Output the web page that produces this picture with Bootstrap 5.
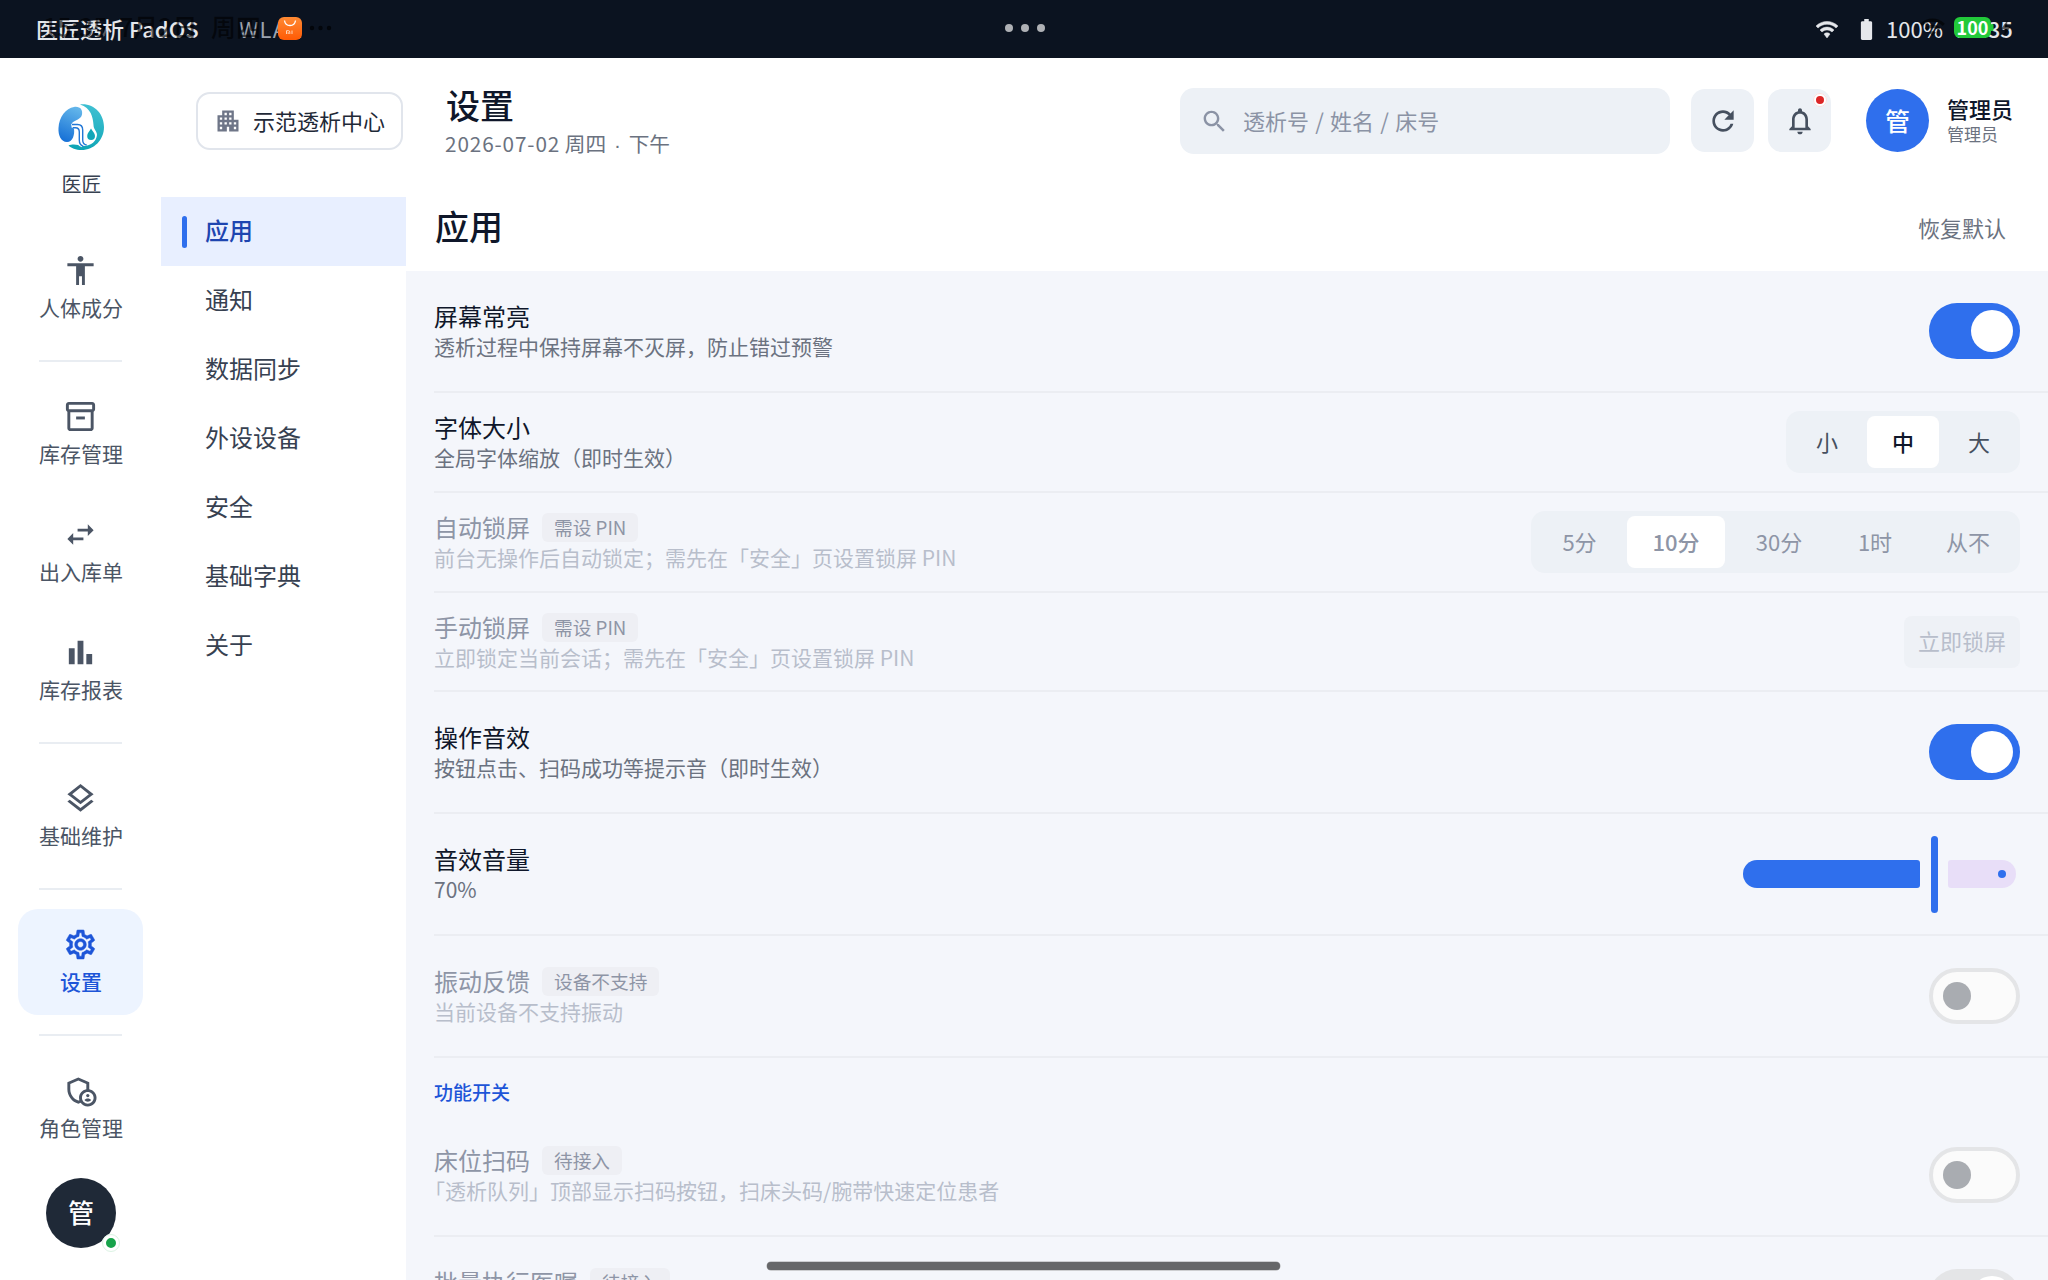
<!DOCTYPE html>
<html lang="zh-CN">
<head>
<meta charset="utf-8">
<meta name="viewport" content="width=device-width, initial-scale=1">
<title>医匠透析 PadOS</title>
<link href="https://cdn.jsdelivr.net/npm/bootstrap@5.3.0/dist/css/bootstrap.min.css" rel="stylesheet">
<style>
:root{--ink:#0f172a;--blue:#2f6fed;--blue-d:#1d55d8;--slate:#4b5565;--muted:#6b7280;--soft:#edf1f6;--line:#ebedf2}
body{font-family:"Noto Sans CJK SC",sans-serif;color:var(--ink);background:#fff;height:1280px;width:2048px;overflow:hidden;line-height:1}
svg{display:block;fill:currentColor;flex:none}
.statusbar{height:58px;background:#0b1320;color:#e5e7eb;font-size:22px;padding:0 35px 0 36px}
.sys{position:absolute;white-space:nowrap;line-height:1}
.ghost{color:rgba(0,0,0,.62);font-weight:500;font-size:25px}
#os{left:36px;top:17px;font-weight:500}
#net{left:239px;top:17px;color:#9ca3af;letter-spacing:1.2px}
#g1{left:43px;top:14px}
#g2{left:119px;top:14px}
#g3{left:211px;top:14px}
#pct{left:1886px;top:17px}
#clock{left:1956px;top:17px;font-weight:500}
#batt{left:1954px;top:17px;width:37px;height:21px;border-radius:6px;background:#22c93a;color:#fff;font-size:18px;font-weight:700;padding-bottom:1px}
.tri{margin-top:-2px}
.tri i{width:8px;height:8px;border-radius:50%;background:#afb1b5}
.rail{width:161px;flex:none}
.brand{padding-top:46px;height:177px}
.brand-name{font-size:20px;color:#374151;margin-top:24px;margin-left:2px}
.rail-item{width:125px;height:106px;padding-top:18px;border-radius:20px;color:var(--slate);font-size:21px}
.rail-item span{line-height:30px;margin-top:4px;margin-left:1px}
.rail-item + .rail-item{margin-top:12px}
.rail-item.on{background:#edf4ff;color:var(--blue-d);font-weight:500}
.rail-line{width:83px;height:2px;background:#e9edf2;margin:19px 0}
.me{width:70px;height:70px;border-radius:50%;background:#1f2937;color:#fff;font-size:26px;font-weight:500;margin-top:17px;margin-left:1px;padding-bottom:2px}
.online{right:-4px;bottom:-4px;width:18px;height:18px;border-radius:50%;background:#16a34a;border:4px solid #fff;outline:1px solid #dcf3e4;outline-offset:-1px}
.topbar{height:139px;padding:30px 36px 0 35px}
.org{height:58px;width:207px;border:2px solid #e1e5ec;border-radius:14px;margin-top:4px;padding-left:16px;font-size:22px;color:#1f2937}
.org svg{color:#6f7688;margin-right:11px}
.org span{padding-bottom:3px}
.heading{margin-left:43px}
.heading h1{font-size:34px;font-weight:500;line-height:40px;margin:-3px 0 0}
.heading p{font-size:20.7px;line-height:30px;color:var(--muted);margin:3px 0 0 -1px}
.heading .date{letter-spacing:.9px}
.heading .dot{font-family:"Liberation Sans",sans-serif;margin:0 2px}
.finder{width:490px;height:66px;border-radius:14px;background:var(--soft);color:#8b93a5;font-size:22px;padding-left:20px;gap:14px}
.finder span{padding-bottom:3px;word-spacing:1.3px}
.tool{width:63px;height:63px;border-radius:14px;background:var(--soft);color:#46505f;margin-top:1px}
.alertdot{right:4px;top:4px;width:14px;height:14px;border-radius:50%;background:#dc2626;border:3px solid #fff;outline:1px solid #f9dede;outline-offset:-1px}
.face{width:63px;height:63px;border-radius:50%;background:var(--blue);color:#fff;font-size:25px;font-weight:500;margin-top:1px;padding-bottom:1px}
.who{width:65px;white-space:nowrap;margin-left:18px;padding-top:7px}
.who b{font-size:22px;font-weight:500;line-height:26px;display:block}
.who span{font-size:17px;line-height:26px;color:var(--muted);display:block}
.sidemenu{width:245px;flex:none}
.sidemenu a{height:69px;padding-left:44px;padding-bottom:3px;font-size:24px;color:#374151;text-decoration:none;position:relative}
.sidemenu a.on{background:#e8efff;color:#1e45b0;font-weight:500}
.sidemenu a.on::before{content:"";position:absolute;left:21px;top:19px;width:5px;height:32px;border-radius:3px;background:var(--blue)}
.panehead{height:74px;padding:0 42px 15px 29px}
.panehead h2{font-size:34px;font-weight:500;margin:0}
.panehead span{font-size:22px;color:var(--muted)}
.pane{background:#f4f6fb;flex:1;padding-left:28px;overflow:hidden}
.opt{height:122px;border-bottom:2px solid var(--line);padding-right:28px;flex:none}
.opt.low{height:100px}
.opt.low.fit{height:99px}
.opt-name{font-size:24px;line-height:31px;height:31px;margin-top:-1px}
.opt-note{font-size:21px;line-height:30px;color:var(--muted)}
.hang{margin-left:-10px}
.off .opt-name{color:#8e95a6}
.off .opt-note{color:#b8becb}
.tagpill{font-size:18.700px;line-height:27px;height:29px;padding:0 12px;border-radius:6px;background:#eeeff4;margin-left:12px;margin-top:2px;white-space:nowrap}
.sw{width:91px;height:56px;border-radius:28px;background:var(--blue);padding:7px}
.sw i{width:42px;height:42px;border-radius:50%;background:#fff;margin-left:auto}
.sw.no{background:#fbfbfb;border:4px solid #e4e5e7;padding:10px}
.sw.no i{width:28px;height:28px;background:#a9acb1;margin-left:0}
.sw.dim{background:#e4e5e7}
.seg{background:var(--soft);border-radius:14px;padding:5px;gap:4px;height:62px;font-size:22px;color:#46505f}
.seg span{width:72px;border-radius:8px;padding-bottom:3px}
.seg .on{background:#fff;color:var(--ink);font-weight:500}
.off .seg,.off .seg .on{color:#8e95a6}
.lockbtn{width:116px;height:52px;border-radius:8px;background:#eef1f6;color:#b8becb;font-size:22px;padding-bottom:3px}
.volume{height:77px;padding-right:4px}
.volume .lvl{height:28px;border-radius:14px 3px 3px 14px;background:var(--blue)}
.volume .grip{width:7px;height:77px;border-radius:4px;background:var(--blue);margin:0 10px 0 11px}
.volume .rest{width:68px;height:28px;border-radius:3px 14px 14px 3px;background:#e8def8;padding-right:10px}
.volume .rest i{width:8px;height:8px;border-radius:50%;background:var(--blue)}
.group{height:57px;font-size:19px;font-weight:500;color:var(--blue-d);padding-top:24px;flex:none}
.homebar{position:absolute;left:767px;top:1262px;width:513px;height:8px;border-radius:4px;background:#666769;box-shadow:0 0 0 .5px #a5a6a8}
</style>
</head>
<body class="d-flex flex-column position-relative">
<header class="statusbar d-flex align-items-center position-relative flex-shrink-0">
  <span class="sys" id="os">医匠透析 PadOS</span>
  <span class="sys" id="net">WLAN</span>
  <span class="sys ghost" id="g1">15:35</span>
  <span class="sys ghost" id="g2">7月2日</span>
  <span class="sys ghost" id="g3">周四</span>
  <svg class="sys" style="left:278px;top:17px" width="24" height="23" viewBox="0 0 24 23"><defs><linearGradient id="og" x2="0" y2="1"><stop stop-color="#ff8a33"/><stop offset="1" stop-color="#ff5a05"/></linearGradient></defs><rect width="24" height="23" rx="6" fill="url(#og)"/><path d="M6.500 3.500c.4 3 2.600 5 5.500 5s5.100-2 5.500-5" fill="none" stroke="#fff" stroke-width="1.300"/><path d="M8.500 17v-3.300h2q1.300 0 1.300 1.300V17M10.200 15.200V17M14 13.500V17" fill="none" stroke="#ffe0c8" stroke-width=".9"/></svg>
  <svg class="sys" style="left:309px;top:25px;color:#03060b" width="23" height="6"><circle cx="3" cy="3" r="2.200"/><circle cx="11.500" cy="3" r="2.200"/><circle cx="20" cy="3" r="2.200"/></svg>
  <div class="tri d-flex gap-2 mx-auto"><i></i><i></i><i></i></div>
  <svg class="sys" style="left:1815px;top:17px" width="24" height="24" viewBox="0 0 24 24"><path d="M1 9l2 2c4.970-4.970 13.030-4.970 18 0l2-2C16.930 2.930 7.080 2.930 1 9zm8 8l3 4 3-4c-1.650-1.660-4.340-1.660-6 0zm-4-4l2 2c2.760-2.760 7.240-2.760 10 0l2-2C15.140 9.140 8.870 9.140 5 13z" stroke="currentColor" stroke-width=".5" stroke-linejoin="round"/></svg>
  <svg class="sys" style="left:1853px;top:17px" width="27" height="25" viewBox="0 0 24 24" preserveAspectRatio="none"><path d="M15.670 4H14V2h-4v2H8.330C7.600 4 7 4.600 7 5.330v15.330C7 21.400 7.600 22 8.330 22h7.330c.740 0 1.340-.600 1.340-1.330V5.330C17 4.600 16.400 4 15.670 4z"/></svg>
  <span class="sys" id="pct">100%</span>
  <span class="sys" id="clock">15:35</span>
  <svg class="sys" style="left:1919px;top:13px;color:rgba(0,0,0,.6)" width="27" height="28" viewBox="0 0 24 24"><path d="M1 9l2 2c4.970-4.970 13.030-4.970 18 0l2-2C16.930 2.930 7.080 2.930 1 9zm8 8l3 3 3-3c-1.650-1.660-4.340-1.660-6 0zm-4-4l2 2c2.760-2.760 7.240-2.760 10 0l2-2C15.140 9.140 8.870 9.140 5 13z"/></svg>
  <span class="sys d-flex align-items-center justify-content-center" id="batt">100</span>
  <svg class="sys" style="left:1991px;top:24px;color:#22c93a" width="3" height="8"><rect width="2.500" height="7" rx="1"/></svg>
  <svg class="sys" style="left:2001px;top:20px;color:rgba(0,0,0,.6)" width="10" height="16" viewBox="0 0 10 16"><path d="M6.500 0L0 9h4l-1 7 7-9.500H6z"/></svg>
</header>

<div class="d-flex flex-grow-1" style="min-height:0">
  <nav class="rail d-flex flex-column align-items-center">
    <div class="brand d-flex flex-column align-items-center">
      <svg width="46" height="46" viewBox="0 0 46 46">
        <defs>
          <linearGradient id="kb" x1=".6" y1="0" x2=".3" y2="1"><stop stop-color="#62b5ea"/><stop offset="1" stop-color="#1670d6"/></linearGradient>
          <linearGradient id="kt" x1=".6" y1="0" x2=".4" y2="1"><stop stop-color="#3fc0d2"/><stop offset="1" stop-color="#0ea5b5"/></linearGradient>
        </defs>
        <path d="M22 .5C36-1 46 10 46 23S36 46 23.500 46C18 46 13 44 10.500 41.500c4-2 9.500-1 14 .5C33 42.500 38.500 37 39 31c0-4-3.500-5.500-3.500-10C35 13 33 4 22 .5z" fill="url(#kt)"/>
        <path d="M16 3C22 2 25 6 24 10.500c-1 5-7 5.500-9.500 8C12.500 21 14 22 16 25c.8 5-1 13-7 13C3 38 0 31 .5 24 1 13 8 4 16 3z" fill="url(#kb)"/>
        <path d="M33 24.500c-1.500 3-3.800 4.800-3.800 7.500a3.900 3.900 0 0 0 7.800 0c0-2.700-2.500-4.500-4-7.500z" fill="#12a6b8"/>
        <path d="M13.500 21.700h3q4 0 4 5V36q0 4.500 4 5.500" fill="none" stroke="#fff" stroke-width="3.500"/>
        <path d="M14 20.500h5.500q5.200 0 5.200 5.500v10q0 4.500 4 5M15 23.700h2.500q3.800 0 3.800 4.300v8q0 5 4 6.300" fill="none" stroke="#2277d6" stroke-width="1.400"/>
      </svg>
      <span class="brand-name">医匠</span>
    </div>
    <div class="rail-item d-flex flex-column align-items-center"><svg width="35" height="35" viewBox="0 0 24 24"><path d="M12 2c1.100 0 2 .9 2 2s-.9 2-2 2-2-.9-2-2 .9-2 2-2zm9 7h-6v13h-2v-6h-2v6H9V9H3V7h18v2z"/></svg><span>人体成分</span></div>
    <div class="rail-line"></div>
    <div class="rail-item d-flex flex-column align-items-center"><svg width="35" height="35" viewBox="0 0 24 24"><path d="M20 2H4c-1 0-2 .9-2 2v3.010c0 .72.43 1.340 1 1.690V20c0 1.100 1.100 2 2 2h14c.9 0 2-.9 2-2V8.700c.57-.35 1-.97 1-1.690V4c0-1.100-1-2-2-2zm-1 18H5V9h14v11zm1-13H4V4h16v3z"/><path d="M9 12h6v2H9z"/></svg><span>库存管理</span></div>
    <div class="rail-item d-flex flex-column align-items-center"><svg width="35" height="35" viewBox="0 0 24 24"><path d="M6.990 11L3 15l3.990 4v-3H14v-2H6.990v-3zM21 9l-3.990-4v3H10v2h7.010v3L21 9z"/></svg><span>出入库单</span></div>
    <div class="rail-item d-flex flex-column align-items-center"><svg width="35" height="35" viewBox="0 0 24 24"><path d="M4 9h4v11H4zm12 4h4v7h-4zm-6-9h4v16h-4z"/></svg><span>库存报表</span></div>
    <div class="rail-line"></div>
    <div class="rail-item d-flex flex-column align-items-center"><svg width="35" height="35" viewBox="0 0 24 24"><path d="M11.990 18.540l-7.370-5.730L3 14.070l9 7 9-7-1.630-1.270-7.380 5.740zM12 16l7.360-5.730L21 9l-9-7-9 7 1.630 1.270L12 16zm0-11.470L17.740 9 12 13.470 6.260 9 12 4.530z"/></svg><span>基础维护</span></div>
    <div class="rail-line"></div>
    <div class="rail-item on d-flex flex-column align-items-center"><svg width="35" height="35" viewBox="0 0 24 24"><path d="M19.430 12.980c.04-.32.070-.64.070-.98s-.03-.66-.07-.98l2.110-1.650c.19-.15.24-.42.12-.64l-2-3.460c-.09-.16-.26-.25-.44-.25-.06 0-.12.010-.17.030l-2.490 1c-.52-.4-1.080-.73-1.690-.98l-.38-2.650C14.460 2.180 14.250 2 14 2h-4c-.25 0-.46.18-.49.42l-.38 2.650c-.61.25-1.170.59-1.690.98l-2.490-1c-.06-.02-.12-.03-.18-.03-.17 0-.34.09-.43.25l-2 3.460c-.13.22-.07.49.12.64l2.110 1.650c-.04.32-.07.65-.07.98s.03.66.07.98l-2.110 1.650c-.19.15-.24.42-.12.64l2 3.460c.09.16.26.25.44.25.06 0 .12-.01.17-.03l2.490-1c.52.4 1.080.73 1.690.98l.38 2.650c.03.24.24.42.49.42h4c.25 0 .46-.18.49-.42l.38-2.650c.61-.25 1.170-.59 1.690-.98l2.490 1c.06.02.12.03.18.03.17 0 .34-.09.43-.25l2-3.460c.12-.22.07-.49-.12-.64l-2.110-1.650zm-1.980-1.710c.04.31.05.52.05.73 0 .21-.02.43-.05.73l-.14 1.130.89.7 1.080.84-.7 1.210-1.270-.51-1.040-.42-.9.68c-.43.32-.84.56-1.250.73l-1.060.43-.16 1.130-.2 1.350h-1.400l-.19-1.350-.16-1.130-1.060-.43c-.43-.18-.83-.41-1.230-.71l-.91-.7-1.060.43-1.270.51-.7-1.210 1.080-.84.89-.7-.14-1.130c-.03-.31-.05-.54-.05-.74s.02-.43.05-.73l.14-1.130-.89-.7-1.080-.84.7-1.210 1.270.51 1.040.42.9-.68c.43-.32.84-.56 1.250-.73l1.060-.43.16-1.130.2-1.350h1.390l.19 1.350.16 1.130 1.060.43c.43.18.83.41 1.230.71l.91.7 1.060-.43 1.270-.51.7 1.210-1.070.85-.89.7.14 1.130zM12 8c-2.210 0-4 1.790-4 4s1.790 4 4 4 4-1.790 4-4-1.790-4-4-4zm0 6c-1.100 0-2-.9-2-2s.9-2 2-2 2 .9 2 2-.9 2-2 2z" stroke="currentColor" stroke-width=".3"/></svg><span>设置</span></div>
    <div class="rail-line"></div>
    <div class="rail-item d-flex flex-column align-items-center"><svg width="35" height="35" viewBox="0 0 24 24"><circle cx="17" cy="15.500" r="1.120"/><path d="M17 17.500c-.73 0-2.190.36-2.240 1.080.5.71 1.320 1.170 2.240 1.170s1.740-.46 2.240-1.170c-.05-.72-1.510-1.080-2.240-1.080z"/><path fill-rule="evenodd" d="M18 11.090V6.270L10.500 3 3 6.270v4.910c0 4.540 3.200 8.790 7.500 9.820.55-.13 1.080-.32 1.600-.55C13.180 21.990 14.970 23 17 23c3.310 0 6-2.690 6-6 0-2.970-2.160-5.430-5-5.910zM11 17c0 .56.080 1.110.23 1.620-.24.11-.48.22-.73.3-3.170-1-5.500-4.240-5.500-7.740v-3.600l5.500-2.400 5.500 2.400v3.510c-2.840.48-5 2.940-5 5.910zm6 4c-2.210 0-4-1.790-4-4s1.790-4 4-4 4 1.790 4 4-1.790 4-4 4z"/></svg><span>角色管理</span></div>
    <div class="me d-flex align-items-center justify-content-center position-relative flex-shrink-0">管<span class="online position-absolute"></span></div>
  </nav>

  <div class="flex-grow-1 d-flex flex-column">
    <div class="topbar d-flex align-items-start flex-shrink-0">
      <div class="org d-flex align-items-center text-nowrap"><svg width="28" height="28" viewBox="0 0 24 24"><path d="M17 11V3H7v4H3v14h8v-4h2v4h8V11h-4zM7 19H5v-2h2v2zm0-4H5v-2h2v2zm0-4H5V9h2v2zm4 4H9v-2h2v2zm0-4H9V9h2v2zm0-4H9V5h2v2zm4 8h-2v-2h2v2zm0-4h-2V9h2v2zm0-4h-2V5h2v2zm4 12h-2v-2h2v2zm0-4h-2v-2h2v2z"/></svg><span>示范透析中心</span></div>
      <div class="heading"><h1>设置</h1><p><span class="date">2026-07-02</span> 周四<span class="dot"> · </span>下午</p></div>
      <div class="finder d-flex align-items-center ms-auto"><svg width="29" height="29" viewBox="0 0 24 24"><path d="M15.500 14h-.79l-.28-.27C15.410 12.590 16 11.110 16 9.500 16 5.910 13.090 3 9.500 3S3 5.910 3 9.500 5.910 16 9.500 16c1.610 0 3.090-.59 4.230-1.570l.27.28v.79l5 4.990L20.490 19l-4.990-5zm-6 0C7.010 14 5 11.990 5 9.500S7.010 5 9.500 5 14 7.010 14 9.500 11.990 14 9.500 14z"/></svg><span>透析号 / 姓名 / 床号</span></div>
      <div class="tool d-flex align-items-center justify-content-center" style="margin-left:21px"><svg width="32" height="32" viewBox="0 0 24 24"><path d="M17.650 6.350C16.200 4.900 14.210 4 12 4c-4.420 0-7.990 3.580-7.990 8s3.570 8 7.990 8c3.730 0 6.840-2.550 7.730-6h-2.080c-.82 2.330-3.040 4-5.650 4-3.310 0-6-2.690-6-6s2.690-6 6-6c1.660 0 3.140.69 4.220 1.780L13 11h7V4l-2.350 2.350z"/></svg></div>
      <div class="tool d-flex align-items-center justify-content-center position-relative" style="margin-left:14px"><svg width="32" height="32" viewBox="0 0 24 24"><path d="M12 22c1.100 0 2-.9 2-2h-4c0 1.100.9 2 2 2zm6-6v-5c0-3.070-1.630-5.640-4.500-6.320V4c0-.83-.67-1.500-1.500-1.500s-1.500.67-1.500 1.500v.68C7.640 5.360 6 7.920 6 11v5l-2 2v1h16v-1l-2-2zm-2 1H8v-6c0-2.480 1.510-4.500 4-4.500s4 2.020 4 4.500v6z"/></svg><span class="alertdot position-absolute"></span></div>
      <div class="face d-flex align-items-center justify-content-center" style="margin-left:35px">管</div>
      <div class="who"><b>管理员</b><span>管理员</span></div>
    </div>

    <div class="d-flex flex-grow-1" style="min-height:0">
      <div class="sidemenu d-flex flex-column">
        <a class="on d-flex align-items-center">应用</a>
        <a class="d-flex align-items-center">通知</a>
        <a class="d-flex align-items-center">数据同步</a>
        <a class="d-flex align-items-center">外设设备</a>
        <a class="d-flex align-items-center">安全</a>
        <a class="d-flex align-items-center">基础字典</a>
        <a class="d-flex align-items-center">关于</a>
      </div>
      <main class="flex-grow-1 d-flex flex-column" style="min-height:0">
        <div class="panehead d-flex align-items-center justify-content-between flex-shrink-0"><h2>应用</h2><span>恢复默认</span></div>
        <div class="pane d-flex flex-column">
          <div class="opt d-flex align-items-center justify-content-between">
            <div><div class="opt-name">屏幕常亮</div><div class="opt-note">透析过程中保持屏幕不灭屏，防止错过预警</div></div>
            <div class="sw d-flex align-items-center"><i></i></div>
          </div>
          <div class="opt low d-flex align-items-center justify-content-between">
            <div><div class="opt-name">字体大小</div><div class="opt-note">全局字体缩放（即时生效）</div></div>
            <div class="seg d-flex"><span class="d-flex align-items-center justify-content-center">小</span><span class="on d-flex align-items-center justify-content-center">中</span><span class="d-flex align-items-center justify-content-center">大</span></div>
          </div>
          <div class="opt low off d-flex align-items-center justify-content-between">
            <div><div class="opt-name d-flex align-items-center">自动锁屏<span class="tagpill">需设 PIN</span></div><div class="opt-note">前台无操作后自动锁定；需先在「安全」页设置锁屏 PIN</div></div>
            <div class="seg d-flex"><span class="d-flex align-items-center justify-content-center" style="width:87px">5分</span><span class="on d-flex align-items-center justify-content-center" style="width:98px">10分</span><span class="d-flex align-items-center justify-content-center" style="width:100px">30分</span><span class="d-flex align-items-center justify-content-center" style="width:84px">1时</span><span class="d-flex align-items-center justify-content-center" style="width:94px">从不</span></div>
          </div>
          <div class="opt low fit off d-flex align-items-center justify-content-between">
            <div><div class="opt-name d-flex align-items-center">手动锁屏<span class="tagpill">需设 PIN</span></div><div class="opt-note">立即锁定当前会话；需先在「安全」页设置锁屏 PIN</div></div>
            <div class="lockbtn d-flex align-items-center justify-content-center">立即锁屏</div>
          </div>
          <div class="opt d-flex align-items-center justify-content-between">
            <div><div class="opt-name">操作音效</div><div class="opt-note">按钮点击、扫码成功等提示音（即时生效）</div></div>
            <div class="sw d-flex align-items-center"><i></i></div>
          </div>
          <div class="opt d-flex align-items-center justify-content-between">
            <div><div class="opt-name">音效音量</div><div class="opt-note">70%</div></div>
            <div class="volume d-flex align-items-center"><div class="lvl" style="width:177px"></div><div class="grip"></div><div class="rest d-flex align-items-center justify-content-end"><i></i></div></div>
          </div>
          <div class="opt off d-flex align-items-center justify-content-between">
            <div><div class="opt-name d-flex align-items-center">振动反馈<span class="tagpill">设备不支持</span></div><div class="opt-note">当前设备不支持振动</div></div>
            <div class="sw no d-flex align-items-center"><i></i></div>
          </div>
          <div class="group">功能开关</div>
          <div class="opt off d-flex align-items-center justify-content-between">
            <div><div class="opt-name d-flex align-items-center">床位扫码<span class="tagpill">待接入</span></div><div class="opt-note hang">「透析队列」顶部显示扫码按钮，扫床头码/腕带快速定位患者</div></div>
            <div class="sw no d-flex align-items-center"><i></i></div>
          </div>
          <div class="opt off d-flex align-items-center justify-content-between">
            <div><div class="opt-name d-flex align-items-center">批量执行医嘱<span class="tagpill">待接入</span></div><div class="opt-note">&nbsp;</div></div>
            <div class="sw dim d-flex align-items-center"><i></i></div>
          </div>
        </div>
      </main>
    </div>
  </div>
</div>
<div class="homebar"></div>
<script src="https://cdn.jsdelivr.net/npm/bootstrap@5.3.0/dist/js/bootstrap.bundle.min.js"></script>
</body>
</html>
